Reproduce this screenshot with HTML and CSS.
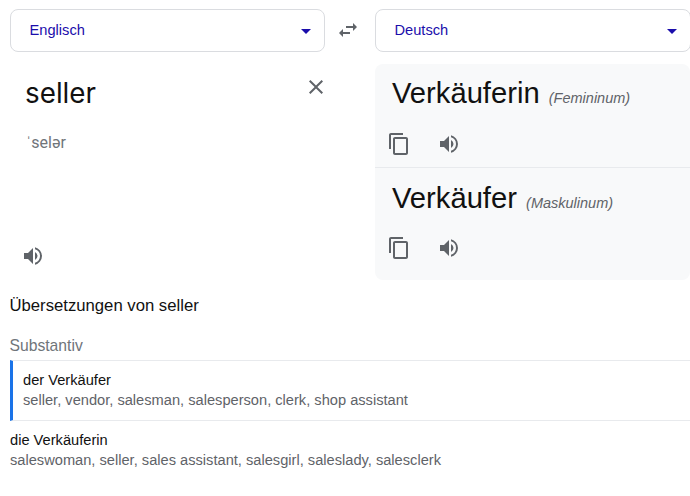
FILE: index.html
```html
<!DOCTYPE html>
<html lang="de">
<head>
<meta charset="utf-8">
<title>Übersetzung</title>
<link rel="stylesheet" href="styles.css">
</head>
<body>
<div class="langs">
  <div class="select"><span>Englisch</span><i class="caret"></i></div>
  <div class="swap">
    <svg width="24" height="24" viewBox="0 0 24 24"><path d="M6.99 11 3 15l3.99 4v-3H14v-2H6.99v-3zM21 9l-3.99-4v3H10v2h7.01v3L21 9z"/></svg>
  </div>
  <div class="select"><span>Deutsch</span><i class="caret"></i></div>
</div>
<div class="panes">
  <div class="source">
    <div class="source-top">
      <div class="word">seller</div>
      <svg class="close" width="24" height="24" viewBox="0 0 24 24"><path d="M19 6.41 17.59 5 12 10.59 6.41 5 5 6.41 10.59 12 5 17.59 6.41 19 12 13.41 17.59 19 19 17.59 13.41 12z"/></svg>
    </div>
    <div class="phon">ˈselər</div>
    <svg class="icon speak-src" width="24" height="24" viewBox="0 0 24 24"><path d="M3 9v6h4l5 5V4L7 9H3zm13.5 3A4.5 4.5 0 0 0 14 7.97v8.05A4.5 4.5 0 0 0 16.5 12zM14 3.23v2.06a7 7 0 0 1 0 13.42v2.06a9 9 0 0 0 0-17.54z"/></svg>
  </div>
  <div class="target">
    <div class="result">
      <div class="trans">Verkäuferin <em>(Femininum)</em></div>
      <div class="actions">
        <svg width="24" height="24" viewBox="0 0 24 24"><path d="M16 1H4c-1.1 0-2 .9-2 2v14h2V3h12V1zm3 4H8c-1.1 0-2 .9-2 2v14c0 1.1.9 2 2 2h11c1.1 0 2-.9 2-2V7c0-1.1-.9-2-2-2zm0 16H8V7h11v14z"/></svg>
        <svg width="24" height="24" viewBox="0 0 24 24"><path d="M3 9v6h4l5 5V4L7 9H3zm13.5 3A4.5 4.5 0 0 0 14 7.97v8.05A4.5 4.5 0 0 0 16.5 12zM14 3.23v2.06a7 7 0 0 1 0 13.42v2.06a9 9 0 0 0 0-17.54z"/></svg>
      </div>
    </div>
    <div class="result second">
      <div class="trans">Verkäufer <em>(Maskulinum)</em></div>
      <div class="actions">
        <svg width="24" height="24" viewBox="0 0 24 24"><path d="M16 1H4c-1.1 0-2 .9-2 2v14h2V3h12V1zm3 4H8c-1.1 0-2 .9-2 2v14c0 1.1.9 2 2 2h11c1.1 0 2-.9 2-2V7c0-1.1-.9-2-2-2zm0 16H8V7h11v14z"/></svg>
        <svg width="24" height="24" viewBox="0 0 24 24"><path d="M3 9v6h4l5 5V4L7 9H3zm13.5 3A4.5 4.5 0 0 0 14 7.97v8.05A4.5 4.5 0 0 0 16.5 12zM14 3.23v2.06a7 7 0 0 1 0 13.42v2.06a9 9 0 0 0 0-17.54z"/></svg>
      </div>
    </div>
  </div>
</div>
<h2 class="heading">Übersetzungen von seller</h2>
<div class="pos">Substantiv</div>
<div class="entry active">
  <div class="term">der Verkäufer</div>
  <div class="syn">seller, vendor, salesman, salesperson, clerk, shop assistant</div>
</div>
<div class="entry">
  <div class="term">die Verkäuferin</div>
  <div class="syn">saleswoman, seller, sales assistant, salesgirl, saleslady, salesclerk</div>
</div>
</body>
</html>
```
FILE: styles.css
```css
* { box-sizing: border-box; }
html, body { margin: 0; padding: 0; }
body {
  width: 690px;
  height: 496px;
  overflow: hidden;
  background: #fff;
  font-family: "Liberation Sans", Arial, sans-serif;
  color: #000;
}
svg { display: block; fill: #5f6368; }
.langs {
  display: grid;
  grid-template-columns: 315px 50px 316px;
  margin: 9px 0 0 9.5px;
  height: 43px;
}
.select {
  display: flex;
  align-items: center;
  justify-content: space-between;
  border: 1px solid #dadce0;
  border-radius: 8px;
  padding: 0 13px 0 19px;
  font-size: 14.65px;
  color: #1a0dab;
}
.select span { position: relative; top: -1px; }
.caret {
  width: 0;
  height: 0;
  border-left: 5px solid transparent;
  border-right: 5px solid transparent;
  border-top: 5px solid #1a0dab;
  margin-top: 2px;
}
.swap { display: flex; align-items: center; justify-content: center; padding: 0 4px 1px 0; }
.panes {
  display: grid;
  grid-template-columns: 365px 315px;
  margin: 12px 0 0 10px;
  height: 216px;
}
.source { display: flex; flex-direction: column; padding-left: 16px; }
.source-top { display: flex; justify-content: space-between; padding: 11px 47px 0 0; height: 59px; }
.word { margin-left: -1px; font-family: Inter, Roboto, sans-serif; font-size: 27.8px; line-height: 36px; color: #111; }
.close { width: 24px; height: 24px; }
.phon { margin-top: 10px; font-family: Roboto, sans-serif; font-size: 16px; line-height: 20px; color: #70757a; }
.speak-src { margin: 91px 0 0 -5px; }
.target { background: #f8f9fa; border-radius: 8px; }
.result { padding: 11px 0 0 12px; height: 104px; border-bottom: 1px solid #e8eaed; }
.result.second { height: 111px; border-bottom: 0; padding-top: 12px; }
.trans { padding-left: 5px; font-size: 29.2px; line-height: 36px; color: #111; }
.trans em { margin-left: 1px; font-size: 14.5px; color: #5f6368; }
.actions { display: flex; gap: 26px; margin-top: 16px; }
.second .actions { margin-top: 15px; }
.heading { margin: 16px 0 0 9.5px; font-size: 16.7px; font-weight: 400; line-height: 20px; color: #111; }
.pos { margin: 20px 0 0 9.5px; height: 24px; font-size: 15.7px; line-height: 20px; color: #70757a; }
.entry { margin-left: 10px; padding-top: 9px; height: 60px; font-size: 14.65px; line-height: 20px; }
.entry.active {
  height: 61px;
  padding-left: 10px;
  border-left: 3px solid #1a73e8;
  border-top: 1px solid #e8eaed;
  border-bottom: 1px solid #e8eaed;
}
.term { color: #111; }
.syn { color: #5f6368; }
```
